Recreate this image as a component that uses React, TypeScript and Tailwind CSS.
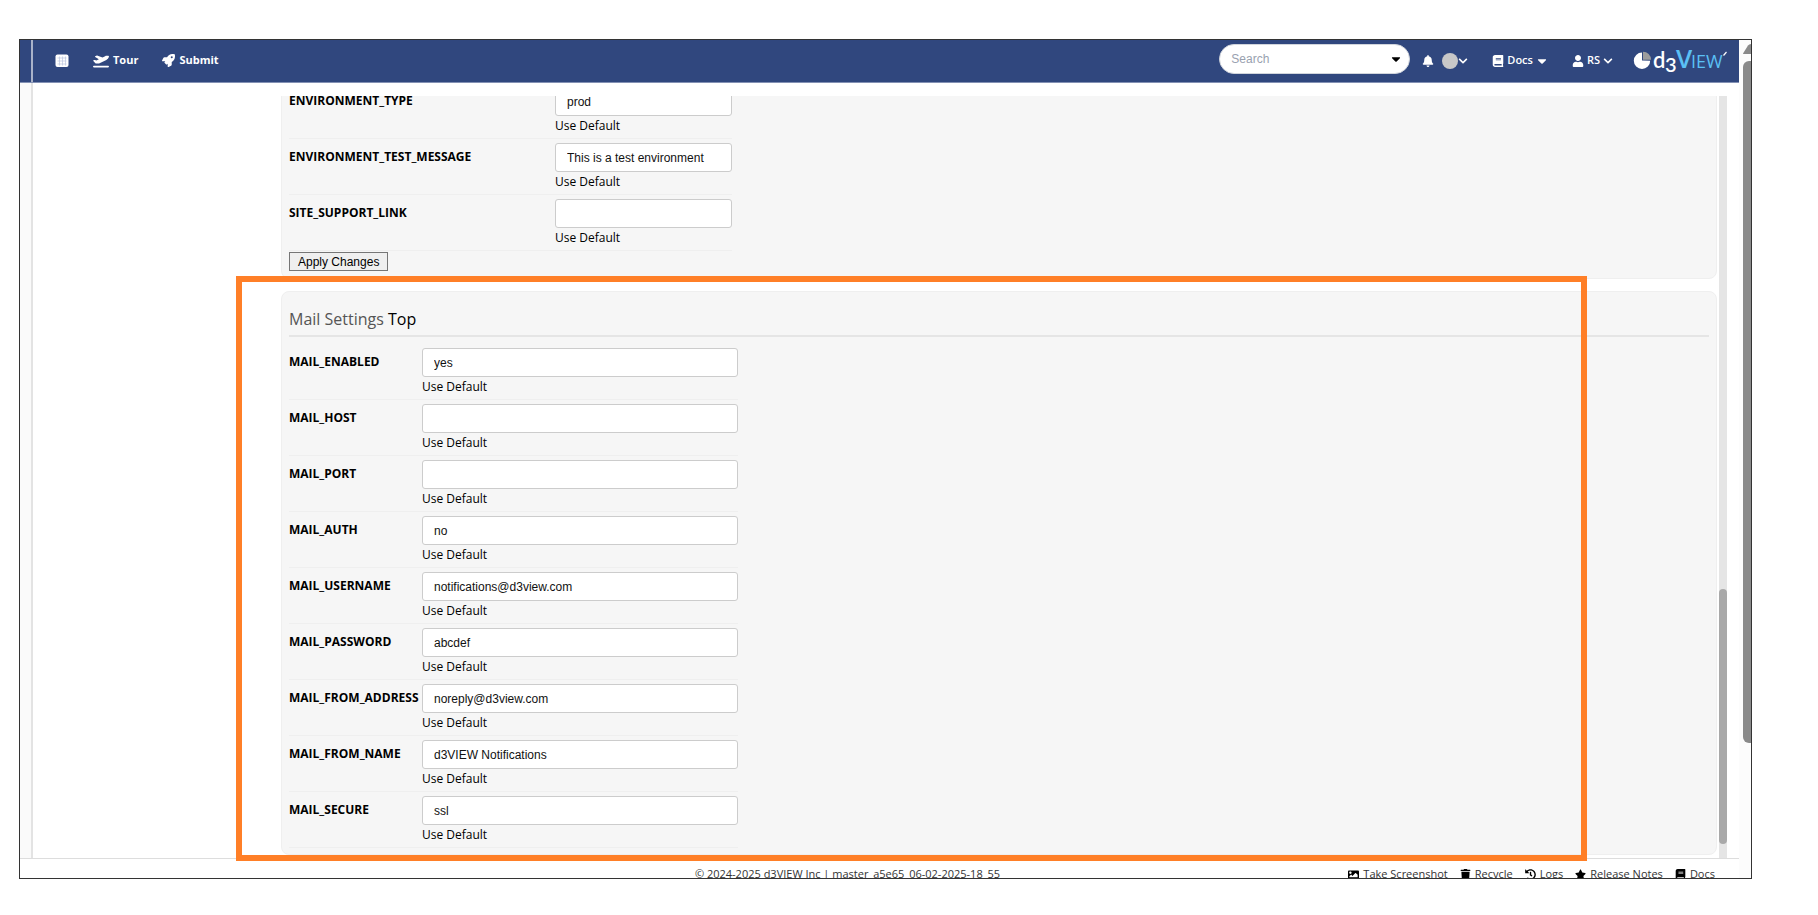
import {
  FaBell,
  FaBook,
  FaCaretDown,
  FaChevronDown,
  FaHistory,
  FaImage,
  FaRocket,
  FaStar,
  FaTrash,
  FaUser,
} from 'react-icons/fa';
import { FaPlaneDeparture } from 'react-icons/fa6';

interface Setting {
  name: string;
  value: string;
}

const environmentSettings: Setting[] = [
  { name: 'ENVIRONMENT_TYPE', value: 'prod' },
  { name: 'ENVIRONMENT_TEST_MESSAGE', value: 'This is a test environment' },
  { name: 'SITE_SUPPORT_LINK', value: '' },
];

const mailSettings: Setting[] = [
  { name: 'MAIL_ENABLED', value: 'yes' },
  { name: 'MAIL_HOST', value: '' },
  { name: 'MAIL_PORT', value: '' },
  { name: 'MAIL_AUTH', value: 'no' },
  { name: 'MAIL_USERNAME', value: 'notifications@d3view.com' },
  { name: 'MAIL_PASSWORD', value: 'abcdef' },
  { name: 'MAIL_FROM_ADDRESS', value: 'noreply@d3view.com' },
  { name: 'MAIL_FROM_NAME', value: 'd3VIEW Notifications' },
  { name: 'MAIL_SECURE', value: 'ssl' },
];

const footerLinks = [
  { label: 'Take Screenshot', icon: FaImage },
  { label: 'Recycle', icon: FaTrash },
  { label: 'Logs', icon: FaHistory },
  { label: 'Release Notes', icon: FaStar },
  { label: 'Docs', icon: FaBook },
];

function GridIcon() {
  return (
    <svg viewBox="0 0 14 14" className="h-[14px] w-[14px]">
      <rect x="0.5" y="0.5" width="13" height="12.5" rx="2" fill="#fff" />
      <path
        d="M2.500 4h9M2.500 7h9M2.500 10h9M4.500 2.500v9M7.500 2.500v9M10.500 2.500v9"
        stroke="#bcc5de"
        strokeWidth="0.7"
      />
    </svg>
  );
}

function Logo() {
  return (
    <svg viewBox="0 0 94 30" className="h-[30px] w-[94px]" role="img" aria-label="d3VIEW">
      <path d="M9 14.500V6.500a8.200 8.200 0 1 0 8.200 8.200z" fill="#fff" />
      <path d="M10 13.700V5.700a8 8 0 0 1 8 8z" fill="#9c9c9c" />
      <text x="20" y="22" fontFamily="Lato, sans-serif" fontSize="22" fill="#fff">d</text>
      <text x="32" y="26" fontFamily="Lato, sans-serif" fontSize="20" fill="#fff">3</text>
      <text x="43" y="22" fontFamily="Open Sans, sans-serif" fontSize="26" fontWeight="600" fill="#5bc0f5">V</text>
      <text x="58" y="22" fontFamily="Open Sans, sans-serif" fontSize="18" fontWeight="500" fill="#5bc0f5">IEW</text>
      <path d="M90.500 9.500l3-3.500" stroke="#fff" strokeWidth="1.2" />
    </svg>
  );
}

function Header() {
  return (
    <header className="flex h-[43px] shrink-0 border-b border-[#8391b4] bg-[#30477e] text-white">
      <div className="w-[13px] shrink-0 border-r-2 border-[#a9b2c9]" />
      <nav className="flex flex-1 items-center pb-px pl-[22px] text-[11px] font-bold">
        <a href="#apps" aria-label="Apps">
          <GridIcon />
        </a>
        <a href="#tour" className="ml-6 flex items-center gap-1">
          <FaPlaneDeparture className="h-4 w-4" />
          Tour
        </a>
        <a href="#submit" className="ml-6 flex items-center gap-1">
          <FaRocket className="h-[13px] w-[13px]" />
          Submit
        </a>
      </nav>
      <div className="flex items-center pr-3 pb-px text-[11px] font-semibold">
        <div className="mb-[3px] flex h-[30px] w-[191px] items-center rounded-full border border-gray-300 bg-white pr-[6px]">
          <input
            type="text"
            aria-label="Search"
            placeholder="Search"
            className="mb-px min-w-0 flex-1 bg-transparent pl-[11px] font-['Liberation_Sans',sans-serif] text-xs font-normal text-black outline-none placeholder:text-gray-400"
          />
          <FaCaretDown className="h-[14px] w-[14px] text-black" />
        </div>
        <button type="button" aria-label="Notifications" className="ml-3">
          <FaBell className="h-3 w-3" />
        </button>
        <button type="button" aria-label="Theme" className="ml-2 flex items-center">
          <span className="h-4 w-4 rounded-full bg-[#c8c8c8]" />
          <FaChevronDown className="h-[10px] w-[10px]" />
        </button>
        <button type="button" className="ml-6 flex items-center gap-[3px]">
          <FaBook className="h-3 w-3" />
          Docs
          <FaCaretDown className="h-[14px] w-3" />
        </button>
        <button type="button" className="ml-6 flex items-center gap-[3px]">
          <FaUser className="h-3 w-3" />
          RS
          <FaChevronDown className="h-[10px] w-[10px]" />
        </button>
        <a href="#home" className="ml-5">
          <Logo />
        </a>
      </div>
    </header>
  );
}

function SettingField({ name, value, columns }: Setting & { columns: string }) {
  return (
    <div className={`grid border-b border-[#efefef] pt-1 ${columns}`}>
      <label htmlFor={name} className="text-xs leading-7 font-bold">
        {name}
      </label>
      <div>
        <input
          id={name}
          type="text"
          defaultValue={value}
          className="block h-[29px] w-full rounded-[3px] border border-[#ccc] bg-white px-[11px] font-['Liberation_Sans',sans-serif] text-xs text-[#111]"
        />
        <a href="#default" className="block pb-[2px] text-xs leading-5">
          Use Default
        </a>
      </div>
    </div>
  );
}

function SettingsArea() {
  return (
    <main className="flex min-h-0 flex-1">
      <div className="w-[13px] shrink-0 border-r-2 border-[#e3e3e3] bg-[#fafafa]" />
      <aside className="w-[248px] shrink-0" />
      <div className="mt-[13px] flex min-w-0 flex-1 flex-col justify-end gap-3 overflow-hidden pb-[3px]">
        <section className="shrink-0 rounded-lg border border-[#efefef] bg-[#f6f6f6] px-[7px] pb-[7px]">
          <form className="w-[443px]">
            {environmentSettings.map((setting) => (
              <SettingField key={setting.name} {...setting} columns="grid-cols-[266px_1fr]" />
            ))}
            <button
              type="button"
              className="mt-px block h-[19px] border border-[#767676] bg-[#efefef] px-2 font-['Liberation_Sans',sans-serif] text-xs leading-3"
            >
              Apply Changes
            </button>
          </form>
        </section>
        <section className="shrink-0 rounded-lg border border-[#efefef] bg-[#f6f6f6] px-[7px] pb-[6px]">
          <h2 className="mb-[7px] border-b-2 border-[#e5e5e5] pt-[11px] text-base leading-8 text-[#555]">
            Mail Settings{' '}
            <a href="#top" className="text-black">
              Top
            </a>
          </h2>
          <form className="w-[449px]">
            {mailSettings.map((setting) => (
              <SettingField key={setting.name} {...setting} columns="grid-cols-[133px_1fr]" />
            ))}
          </form>
        </section>
      </div>
      <div className="mt-[13px] mr-3 ml-[2px] flex w-2 shrink-0 flex-col bg-[#e5e5e5]">
        <div className="flex-[493]" />
        <div className="flex-[255] rounded-full bg-[#a9a9a9]" />
        <div className="h-[14px]" />
      </div>
    </main>
  );
}

function Footer() {
  return (
    <footer className="grid h-5 shrink-0 grid-cols-[1fr_auto_1fr] overflow-hidden border-t border-[#ddd] pt-[7px] pr-6 text-[11px] leading-4 text-[#333]">
      <span />
      <span className="pr-10">© 2024-2025 d3VIEW Inc | master_a5e65_06-02-2025-18_55</span>
      <nav className="flex justify-end gap-3">
        {footerLinks.map(({ label, icon: Icon }) => (
          <a key={label} href="#footer" className="flex items-center gap-1">
            <Icon className="h-[11px] w-[11px] text-black" />
            {label}
          </a>
        ))}
      </nav>
    </footer>
  );
}

export default function App() {
  return (
    <div className="h-screen bg-white pt-[39px] pr-[66px] pb-9 pl-[19px] font-['Open_Sans',sans-serif] text-black">
      <div className="relative flex h-full border border-[#333] bg-white">
        <div className="flex min-w-0 flex-1 flex-col overflow-hidden">
          <Header />
          <SettingsArea />
          <Footer />
        </div>
        {/* page scrollbar */}
        <div className="flex w-3 shrink-0 flex-col items-end bg-[#fcfcfc]">
          <svg viewBox="0 0 8 10" className="mt-1 h-[10px] w-2">
            <path d="M0 9.500L5 1.500Q6 0 8 0V10H1Q0 10 0 9.500z" fill="#8a8a8a" />
          </svg>
          <div className="mt-[7px] w-2 flex-[682] rounded-l-md bg-[#8a8a8a]" />
          <div className="flex-[135]" />
        </div>
        {/* highlight around the mail section */}
        <div className="pointer-events-none absolute top-[236px] right-[164px] bottom-[17px] left-[216px] border-6 border-[#ff7f27]" />
      </div>
    </div>
  );
}
